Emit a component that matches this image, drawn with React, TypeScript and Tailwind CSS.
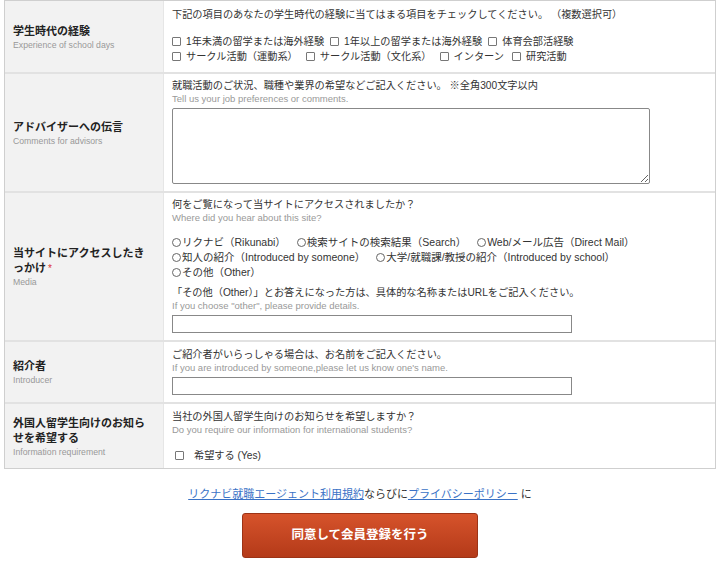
import React from "react";

const FONT = { fontFamily: '"Liberation Sans", "Noto Sans CJK JP", sans-serif' };

function Box() {
  return <span className="mr-[5px] inline-block h-[9px] w-[9px] rounded-[1px] border border-[#777] bg-white align-[-1px]" />;
}

function Radio() {
  return <span className="mr-[1px] inline-block h-[9px] w-[9px] rounded-full border border-[#666] bg-white align-[-1px]" />;
}

function Label({ jp, en, req }: { jp: React.ReactNode; en: string; req?: boolean }) {
  return (
    <div className="flex flex-col justify-center bg-[#f2f2f2] pl-[8px] pr-[12px]">
      <div className="text-[11px] font-bold leading-[15px] text-[#222]">
        {jp}
        {req && <span className="ml-[2px] text-[10px] font-normal leading-[10px] text-[#d33]">*</span>}
      </div>
      <div className="mt-[1px] text-[8.7px] leading-[10px] text-[#999]">{en}</div>
    </div>
  );
}

function Lead({ jp, en }: { jp: string; en: string }) {
  return (
    <>
      <div className="text-[10.2px] leading-[14px] text-[#333]">{jp}</div>
      <div className="text-[9.5px] leading-[11px] text-[#999]">{en}</div>
    </>
  );
}

export default function App() {
  return (
    <div className="min-h-[588px] bg-white" style={FONT}>
      <div className="mx-[4px] grid grid-cols-[158px_1fr] border border-[#cfcfcf]">
        <Label jp="学生時代の経験" en="Experience of school days" />
        <div className="h-[71px] border-l border-[#e6e6e6] px-[8px] pt-[7px]">
          <div className="text-[10.2px] leading-[14px] text-[#333]">
            下記の項目のあなたの学生時代の経験に当てはまる項目をチェックしてください。&nbsp;（複数選択可）
          </div>
          <div className="mt-[12px] text-[10.2px] leading-[15px] text-[#333]">
            <div className="flex gap-[6px]">
              <span><Box />1年未満の留学または海外経験</span>
              <span><Box />1年以上の留学または海外経験</span>
              <span><Box />体育会部活経験</span>
            </div>
            <div className="flex gap-[8px]">
              <span><Box />サークル活動（運動系）</span>
              <span><Box />サークル活動（文化系）</span>
              <span><Box />インターン</span>
              <span><Box />研究活動</span>
            </div>
          </div>
        </div>

        <div className="col-span-2 h-[2px] bg-[#e2e2e2]" />

        <Label jp="アドバイザーへの伝言" en="Comments for advisors" />
        <div className="h-[117px] border-l border-[#e6e6e6] px-[8px] pt-[5px]">
          <Lead jp="就職活動のご状況、職種や業界の希望などご記入ください。 ※全角300文字以内" en="Tell us your job preferences or comments." />
          <textarea className="mt-[4px] block h-[76px] w-[478px] rounded-[2px] border border-[#888] bg-white" />
        </div>

        <div className="col-span-2 h-[2px] bg-[#e2e2e2]" />

        <Label jp="当サイトにアクセスしたきっかけ" en="Media" req />
        <div className="h-[147px] border-l border-[#e6e6e6] px-[8px] pt-[5px]">
          <Lead jp="何をご覧になって当サイトにアクセスされましたか？" en="Where did you hear about this site?" />
          <div className="mt-[12px] text-[10.5px] leading-[15px] text-[#333]">
            <div className="flex gap-[11px]">
              <span><Radio />リクナビ（Rikunabi）</span>
              <span><Radio />検索サイトの検索結果（Search）</span>
              <span><Radio />Web/メール広告（Direct Mail）</span>
            </div>
            <div className="flex gap-[11px]">
              <span><Radio />知人の紹介（Introduced by someone）</span>
              <span><Radio />大学/就職課/教授の紹介（Introduced by school）</span>
            </div>
            <div>
              <Radio />その他（Other）
            </div>
          </div>
          <div className="mt-[6px]">
            <Lead jp="「その他（Other）」とお答えになった方は、具体的な名称またはURLをご記入ください。" en={'If you choose "other", please provide details.'} />
          </div>
          <input className="mt-[4px] block h-[18px] w-[400px] border border-[#888] bg-white" />
        </div>

        <div className="col-span-2 h-[2px] bg-[#e2e2e2]" />

        <Label jp="紹介者" en="Introducer" />
        <div className="h-[60px] border-l border-[#e6e6e6] px-[8px] pt-[6px]">
          <Lead jp="ご紹介者がいらっしゃる場合は、お名前をご記入ください。" en="If you are introduced by someone,please let us know one's name." />
          <input className="mt-[4px] block h-[18px] w-[400px] border border-[#888] bg-white" />
        </div>

        <div className="col-span-2 h-[2px] bg-[#e2e2e2]" />

        <Label jp="外国人留学生向けのお知らせを希望する" en="Information requirement" />
        <div className="h-[64px] border-l border-[#e6e6e6] px-[8px] pt-[6px]">
          <Lead jp="当社の外国人留学生向けのお知らせを希望しますか？" en="Do you require our information for international students?" />
          <div className="mt-[13px] pl-[3px] text-[10.2px] leading-[15px] text-[#333]">
            <span className="mr-[10px] inline-block h-[9px] w-[9px] rounded-[1px] border border-[#777] align-[-1px]" />
            希望する (Yes)
          </div>
        </div>
      </div>

      <div className="mt-[17px] text-center text-[11px] leading-[16px] text-[#333]">
        <a href="#" className="text-[#3a72c6] underline">リクナビ就職エージェント利用規約</a>ならびに
        <a href="#" className="text-[#3a72c6] underline">プライバシーポリシー</a> に
      </div>

      <div className="mt-[11px] flex justify-center">
        <button className="h-[45px] w-[236px] rounded-[3px] border border-[#9c3316] bg-gradient-to-b from-[#d6532b] to-[#b43a19] text-[12.5px] font-bold text-white">
          同意して会員登録を行う
        </button>
      </div>
    </div>
  );
}
